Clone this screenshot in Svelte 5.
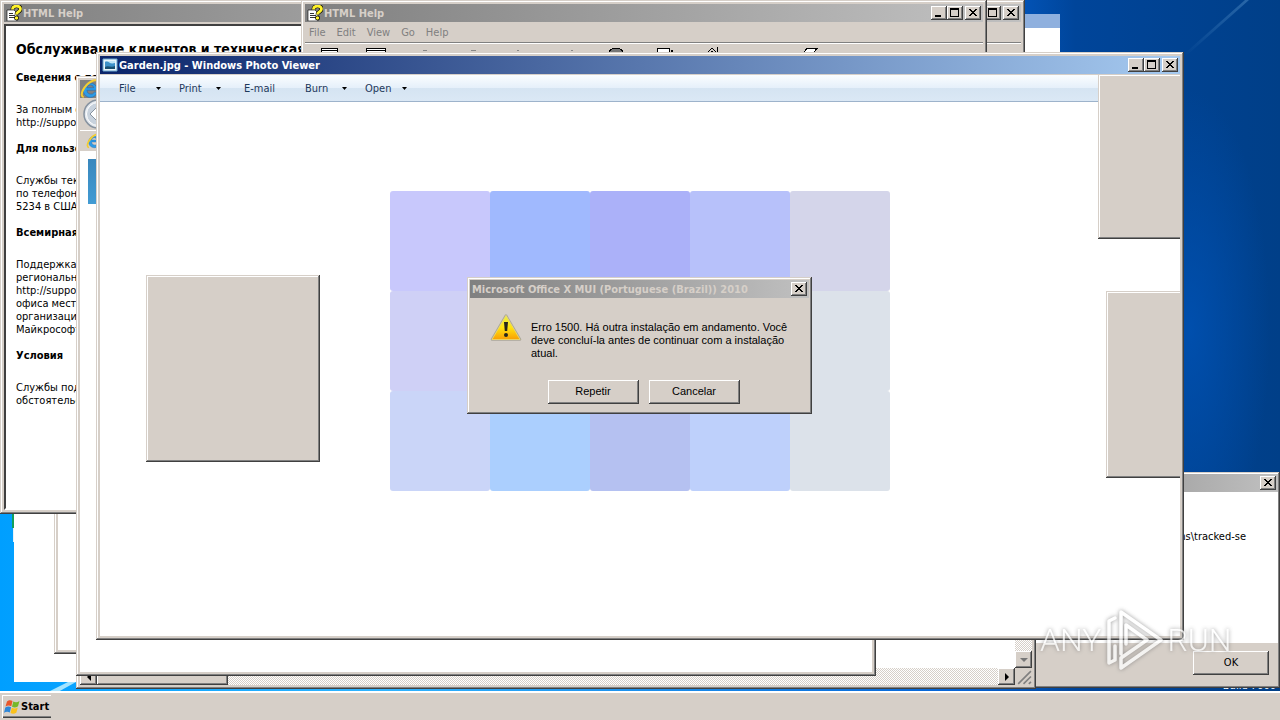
<script>
  const sections = [
    { title: 'Сведения о поддержке', lines: ['За полным описанием', 'http://support.microsoft.com'] },
    { title: 'Для пользователей', lines: ['Службы текстового', 'по телефону', '5234 в США'] },
    {
      title: 'Всемирная поддержка',
      lines: ['Поддержка', 'региональных', 'http://support.microsoft.com', 'офиса местного', 'организацией', 'Майкрософт']
    },
    { title: 'Условия', lines: ['Службы поддержки', 'обстоятельства'] }
  ];
  const helpMenu = ['File', 'Edit', 'View', 'Go', 'Help'];
  const viewerMenu = [
    { label: 'File', drop: true },
    { label: 'Print', drop: true },
    { label: 'E-mail', drop: false },
    { label: 'Burn', drop: true },
    { label: 'Open', drop: true }
  ];
  const tiles = [
    '#c8c8fc', '#a0b9fe', '#abb1f9', '#b7c1fa', '#d4d5ea',
    '#cfd0f6', '#a8c4fe', '#b1b9f6', '#bccafa', '#dce2ea',
    '#cad5f8', '#abcffe', '#b5c1f1', '#bed0fb', '#dce2ea'
  ];
</script>

{#snippet cap(kind)}
  <button class="cap" aria-label={kind}>
    <svg width="12" height="10" viewBox="0 0 12 10" shape-rendering="crispEdges">
      {#if kind === 'Minimize'}
        <path d="M2 7h6v2H2z" />
      {:else if kind === 'Maximize'}
        <path d="M1 0h9v9H1zM2 2v6h7V2z" fill-rule="evenodd" />
      {:else}
        <path d="M2 1h2v1h1v1h2V2h1V1h2v1H9v1H8v1H7v1h1v1h1v1h1v1H8V7H7V6H5v1H4v1H2V7h1V6h1V5h1V4H4V3H3V2H2z" />
      {/if}
    </svg>
  </button>
{/snippet}

{#snippet helpIcon()}
  <svg class="icon" width="16" height="16" viewBox="0 0 16 16">
    <path d="M1 5h7l3 3v8H1z" fill="#fff" stroke="#000" stroke-width=".6" />
    <path d="M3 8.500h4M3 10.500h6M3 12.500h6" stroke="#333" />
    <path d="M6.500 4.500c0-4.500 8-4.500 8-.5 0 3-4 2.500-4 5.500" fill="none" stroke="#000" stroke-width="4" />
    <circle cx="10.500" cy="13" r="2.400" fill="#000" />
    <path d="M6.500 4.500c0-4.500 8-4.500 8-.5 0 3-4 2.500-4 5.500" fill="none" stroke="#fff22a" stroke-width="2.800" />
    <circle cx="10.500" cy="13" r="1.700" fill="#fff22a" />
  </svg>
{/snippet}

{#snippet ie(size)}
  <svg width={size} height={size} viewBox="0 0 16 16">
    <path d="M14 9H5.500a3.200 3.200 0 0 0 6 1.500h2.300A5.700 5.700 0 1 1 14 9zM5.500 7H11a2.800 2.800 0 0 0-5.500 0z" fill="#2d9be6" stroke="#1467b3" stroke-width=".4" />
    <path d="M3 14.500C-1 14 3 5 9 2c3-1.500 6-1.500 5 1.500" fill="none" stroke="#f4cd2f" stroke-width="1.600" />
  </svg>
{/snippet}

<main class="desktop">
  <svg class="wallpaper" viewBox="0 0 1280 720" preserveAspectRatio="none" aria-hidden="true">
    <defs>
      <linearGradient id="sky" x1="0" x2="1">
        <stop offset="0" stop-color="#009fff" />
        <stop offset=".3" stop-color="#30b4ff" />
        <stop offset=".75" stop-color="#0563d6" />
        <stop offset=".84" stop-color="#00459a" />
        <stop offset="1" stop-color="#003f88" />
      </linearGradient>
      <radialGradient id="glow">
        <stop offset="0" stop-color="#0052b4" stop-opacity=".8" />
        <stop offset="1" stop-color="#0052b4" stop-opacity="0" />
      </radialGradient>
      <linearGradient id="ray" x1="1" x2="0" y1="0" y2="1">
        <stop offset="0" stop-color="#5a96cc" stop-opacity=".45" />
        <stop offset="1" stop-color="#5a96cc" stop-opacity="0" />
      </linearGradient>
    </defs>
    <rect width="1280" height="720" fill="url(#sky)" />
    <ellipse cx="1190" cy="330" rx="80" ry="240" fill="url(#glow)" />
    <path d="M1245 0 1184 54 1186 56 1249 0z" fill="url(#ray)" />
    <path d="M48 692 68 682h8l-18 10z" fill="#a5e4ff" />
    <path d="M12 513h2v15h-2z" fill="#12a05a" />
    <path d="M13 528h1v14h-1z" fill="#e6f2f8" />
  </svg>

  <section class="back-window" aria-label="Background window"><div class="back-title"></div></section>
  <section class="win slim-window" aria-label="Window"></section>

  <section class="win help-far" aria-label="HTML Help">
    <header class="title inactive">{@render cap('Maximize')}<span class="gap"></span>{@render cap('Close')}</header>
    <div class="far-menu"></div>
  </section>

  <section class="win help-text" aria-label="HTML Help">
    <header class="title inactive">{@render helpIcon()}<h2>HTML Help</h2></header>
    <article>
      <h1>Обслуживание клиентов и техническая</h1>
      {#each sections as s}
        <h3>{s.title}</h3>
        <p>{#each s.lines as l}<span>{l}</span>{/each}</p>
      {/each}
    </article>
  </section>

  <section class="win help-near" aria-label="HTML Help">
    <header class="title inactive">
      {@render helpIcon()}<h2>HTML Help</h2>
      {@render cap('Minimize')}{@render cap('Maximize')}<span class="gap"></span>{@render cap('Close')}
    </header>
    <nav class="help-menu">{#each helpMenu as m}<button>{m}</button>{/each}</nav>
    <svg class="tools" width="520" height="16" viewBox="0 0 520 16" shape-rendering="crispEdges">
      <path d="M16.500 4.500h16v12h-16zM61.500 4.500h19v12h-19z" fill="#fff" stroke="#000" />
      <path d="M17 6h15M62 6h18" stroke="#000" />
      <ellipse cx="311" cy="11" rx="8" ry="7" fill="#777" stroke="#000" />
      <path d="M352.500 4.500h12v12h-12z" fill="#fff" stroke="#000" />
      <path d="M366 6h2v3h-2z" fill="#000" />
      <path d="M402 9l5-5 5 5M405 9l2-2 2 2M412.500 3v6" fill="none" stroke="#000" />
      <path d="M498 9l4-4.500h10l-4 4.500" fill="#fff" stroke="#000" />
      <path d="M118 6.500h4M166 6.500h5M212 6.500h2M266 6.500h2" stroke="#888" />
    </svg>
  </section>

  <section class="win msg-window" aria-label="Message">
    <header class="title inactive">{@render cap('Close')}</header>
    <div class="msg-body"><p>C:\Users\admin\Programs\tracked-se</p></div>
    <footer><button class="push">OK</button></footer>
  </section>

  <section class="win ie-window" aria-label="Internet Explorer">
    <div class="ie-page">
      <div class="vscroll"><button class="arrow" aria-label="Scroll down"><svg width="8" height="4" viewBox="0 0 8 4"><path d="M0 0h8L4 4z" fill="#777" /></svg></button></div>
    </div>
    <div class="hscroll">
      <button class="arrow" aria-label="Scroll left"><svg width="4" height="8" viewBox="0 0 4 8"><path d="M4 0v8L0 4z" /></svg></button>
      <div class="thumb"></div>
      <button class="arrow right" aria-label="Scroll right"><svg width="4" height="8" viewBox="0 0 4 8"><path d="M0 0v8l4-4z" /></svg></button>
      <svg width="16" height="16" viewBox="0 0 16 16"><path d="M3 15 15 3M8 15l7-7M13 15l2-2" stroke="#808080" stroke-width="1.500" /></svg>
    </div>
  </section>

  <section class="win ie-front" aria-label="Internet Explorer">
    <header class="title inactive">{@render ie(20)}</header>
    <div class="ie-nav">
      <svg width="32" height="32" viewBox="0 0 32 32"><circle cx="16" cy="16" r="14" fill="#e3e8ee" stroke="#8793a0" stroke-width="1.500" /><circle cx="16" cy="16" r="11.500" fill="#c8d2dd" stroke="#fff" /><path d="M16 8 8 16l8 8v-5h8v-6h-8z" fill="#fff" stroke="#8793a0" /></svg>
    </div>
    <div class="ie-tab">{@render ie(16)}</div>
    <div class="ie-banner"></div>
  </section>

  <section class="win viewer" aria-label="Windows Photo Viewer">
    <header class="title active">
      <svg class="icon" width="16" height="16" viewBox="0 0 16 16"><path d="M1 2h14v12H1z" fill="#e9f4fb" stroke="#69a6cf" /><path d="M3 4h10v8H3z" fill="#3d90c8" /><path d="M3 5c4-2 4 3 10 1V4H3z" fill="#bfe4f7" /><path d="M3 12v-2c3-2 6 1 10-1v3z" fill="#184e70" /></svg>
      <h2>Garden.jpg - Windows Photo Viewer</h2>
      {@render cap('Minimize')}{@render cap('Maximize')}<span class="gap"></span>{@render cap('Close')}
    </header>
    <nav class="viewer-menu">
      {#each viewerMenu as m}
        <button class:drop={m.drop}>{m.label}{#if m.drop}<svg width="5" height="3" viewBox="0 0 5 3"><path d="M0 0h5L2.500 3z" /></svg>{/if}</button>
      {/each}
    </nav>
    <div class="canvas">
      <div class="mosaic">{#each tiles as c}<i style:background={c}></i>{/each}</div>
    </div>
    <div class="panel left"></div>
    <div class="panel upper"></div>
    <div class="panel lower"></div>
  </section>

  <div class="win dialog" role="alertdialog" aria-labelledby="dlg-title" aria-describedby="dlg-text">
    <header class="title inactive"><h2 id="dlg-title">Microsoft Office X MUI (Portuguese (Brazil)) 2010</h2>{@render cap('Close')}</header>
    <div class="dlg-body">
      <svg width="32" height="32" viewBox="0 0 32 32">
        <defs><linearGradient id="warn" x2="0" y2="1"><stop offset="0" stop-color="#e9ee4a" /><stop offset=".5" stop-color="#ffe411" /><stop offset="1" stop-color="#f99f05" /></linearGradient></defs>
        <path d="M16 3.500 30 27.500H2z" fill="url(#warn)" stroke="#aaa79b" stroke-width="2.500" stroke-linejoin="round" />
        <path d="M16 3.500 30 27.500H2z" fill="url(#warn)" stroke="#f1dd69" stroke-width=".8" stroke-linejoin="round" />
        <path d="M14 10h4l-.8 9h-2.400z" fill="#25251d" /><circle cx="16" cy="23" r="2" fill="#25251d" />
      </svg>
      <p id="dlg-text"><span>Erro 1500. Há outra instalação em andamento. Você</span><span>deve concluí-la antes de continuar com a instalação</span><span>atual.</span></p>
    </div>
    <div class="dlg-actions"><button class="push">Repetir</button><button class="push">Cancelar</button></div>
  </div>

  <div class="build">Build 7600</div>

  <footer class="taskbar">
    <button class="start">
      <svg width="16" height="16" viewBox="0 0 16 16">
        <path d="M3 2.500c2-2 4-1.500 5.500-.5L7.300 7.300C5.500 6.300 3.700 6.300 1.500 7.500z" fill="#e9572b" /><path d="M9.300 2.500c2 1 4 1 6.200-.5L14 7.300c-2 1.500-4 1.500-6 .5z" fill="#76b82a" />
        <path d="M1.300 8.500c2-1.200 4-1.200 5.800-.2L5.800 13.500C4 12.500 2 12.500 0 13.700z" fill="#2f87d8" /><path d="M7.800 8.800c2 1 4 1 6-.3l-1.500 5.200c-2 1.300-4 1.300-5.800.3z" fill="#fbc21c" />
      </svg>
      Start
    </button>
  </footer>

  <div class="watermark" aria-label="ANY RUN">
    <span>ANY</span>
    <svg width="60" height="64" viewBox="0 0 60 64" fill="none" stroke="#fff" stroke-width="3.500" stroke-linejoin="round" stroke-linecap="round">
      <path d="M17 46V4L57 32 17 60V50L43 32 22 17V36" />
      <path d="M11 10 5 13v42l6-3V38" />
    </svg>
    <span>RUN</span>
  </div>
</main>

<style>
  :global(body) { margin: 0; overflow: hidden; }
  * { box-sizing: border-box; }
  .desktop {
    position: relative; height: 100vh; overflow: hidden; background: #00459a; color: #000;
    font: 11px/13px "DejaVu Sans Condensed", "DejaVu Sans", sans-serif;
  }
  h1, h2, h3, p { margin: 0; font-size: 11px; line-height: 13px; }
  button { font: inherit; color: inherit; margin: 0; padding: 0; border: 0; background: none; white-space: nowrap; }
  svg { display: block; flex: none; }
  .wallpaper { position: absolute; inset: 0; width: 100%; height: 100%; }

  .win {
    position: absolute; display: flex; flex-direction: column; padding: 4px; overflow: hidden; background: #d6cfc8;
    box-shadow: inset -1px -1px #404040, inset 1px 1px #d6cfc8, inset -2px -2px #808080, inset 2px 2px #fff;
  }
  .title { display: flex; align-items: center; flex: none; height: 18px; padding: 0 2px; color: #d6cfc8; }
  .title h2 { flex: 1; white-space: nowrap; overflow: hidden; }
  .inactive { background: linear-gradient(90deg, #808080, #c0c0c0); }
  .active { background: linear-gradient(90deg, #0a246a, #a6caf0); color: #fff; }
  .icon { margin-right: 1px; }
  .gap { width: 2px; }
  .cap {
    display: grid; place-items: center; flex: none; width: 16px; height: 14px; background: #d6cfc8; color: #000;
    box-shadow: inset -1px -1px #404040, inset 1px 1px #fff, inset -2px -2px #808080;
  }

  .back-window { position: absolute; left: 14px; top: 14px; width: 1046px; height: 668px; background: #fff; }
  .back-title { height: 14px; background: #8fb0de; }
  .slim-window, .ie-front { background: linear-gradient(#fff, #fff) content-box, #d6cfc8; }
  .slim-window { left: 54px; top: 300px; width: 400px; height: 354px; }

  .help-far { left: 340px; top: 0; width: 685px; height: 500px; }
  .help-far .title { justify-content: flex-end; }
  .far-menu { height: 21px; border-bottom: 1px solid #808080; box-shadow: 0 1px #fff; }

  .help-text { left: 0; top: 0; width: 690px; height: 514px; }
  .help-text article {
    flex: 1; margin-top: 2px; padding: 14px 10px; background: #fff; overflow: hidden; white-space: nowrap;
    border: 2px solid; border-color: #404040 #fff #fff #404040;
  }
  h1 { font-size: 14px; line-height: 18px; margin-bottom: 13px; }
  h3 { margin-bottom: 19px; }
  article p { margin-bottom: 13px; }
  p span { display: block; }

  .help-near { left: 301px; top: 0; width: 686px; height: 500px; }
  .help-menu { display: flex; gap: 11px; height: 21px; padding: 0 4px; color: #808080; border-bottom: 1px solid #808080; box-shadow: 0 1px #fff; }
  .tools { margin-top: 1px; }

  .msg-window { left: 1000px; top: 472px; width: 280px; height: 216px; padding: 2px 2px 4px; }
  .msg-window .title { justify-content: flex-end; }
  .msg-body { flex: 1; padding: 38px 32px 0 0; background: #fff; text-align: right; white-space: nowrap; }
  .msg-window footer { display: flex; justify-content: flex-end; padding: 8px 9px; height: 41px; }
  .msg-window .push { width: 76px; }
  .push {
    height: 24px; width: 91px; padding-bottom: 2px; background: #d6cfc8;
    box-shadow: inset -1px -1px #404040, inset 1px 1px #fff, inset -2px -2px #808080;
  }

  .ie-window { left: 76px; top: 76px; width: 960px; height: 613px; }
  .ie-page { display: flex; justify-content: flex-end; flex: 1; background: #fff; }
  .vscroll, .hscroll { background: repeating-conic-gradient(#fff 0 25%, #d6cfc8 0 50%) 0 0 / 2px 2px; }
  .vscroll { display: flex; align-items: flex-end; width: 17px; }
  .hscroll { display: flex; height: 17px; }
  .arrow, .thumb { background: #d6cfc8; box-shadow: inset -1px -1px #404040, inset 1px 1px #fff, inset -2px -2px #808080; }
  .arrow { display: grid; place-items: center; width: 17px; height: 17px; }
  .thumb { width: 131px; }
  .right { margin-left: auto; }
  .hscroll > svg { background: #d6cfc8; width: 17px; height: 17px; }

  .ie-front { left: 76px; top: 76px; width: 800px; height: 600px; }
  .ie-front .title { padding: 0; }
  .ie-nav { height: 32px; padding-left: 2px; background: #d6cfc8; }
  .ie-tab { height: 21px; padding: 2px 6px; background: #d6cfc8; border-top: 1px solid #fff; }
  .ie-banner { height: 45px; margin: 8px; background: linear-gradient(#3987bd, #429bd3); }

  .viewer { left: 96px; top: 52px; width: 1088px; height: 588px; }
  .viewer-menu {
    display: flex; gap: 18px; height: 27px; margin-top: 1px; padding: 0 19px; align-items: center; color: #1e395b;
    background: linear-gradient(#fafdff, #e6f0fa 48%, #d5e4f2 52%, #dbe8f5); border-bottom: 1px solid #9db3cb;
  }
  .viewer-menu button { display: flex; align-items: center; justify-content: space-between; margin: 0 12px 0 5px; }
  .viewer-menu button.drop { width: 42px; margin: 0; }
  .canvas { flex: 1; display: grid; justify-content: center; align-content: start; padding-top: 89px; background: #fff; }
  .mosaic { display: grid; grid-template-columns: repeat(5, 100px); grid-auto-rows: 100px; }
  .mosaic i { border-radius: 3px; }
  .panel {
    position: absolute; background: #d6cfc8;
    box-shadow: inset -1px -1px #404040, inset 1px 1px #d6cfc8, inset -2px -2px #808080, inset 2px 2px #fff;
  }
  .left { left: 50px; top: 223px; width: 174px; height: 187px; }
  .upper, .lower { right: 4px; box-shadow: inset 0 -1px #404040, inset 1px 1px #d6cfc8, inset 0 -2px #808080, inset 2px 2px #fff; }
  .upper { top: 22px; width: 82px; height: 165px; }
  .lower { top: 239px; width: 74px; height: 187px; }

  .dialog { left: 467px; top: 277px; width: 345px; height: 137px; padding: 3px; font-family: "Liberation Sans", Arial, sans-serif; }
  .dialog h2 { font-family: "DejaVu Sans Condensed", "DejaVu Sans", sans-serif; }
  .dlg-body { display: flex; gap: 9px; padding: 14px 20px 0; height: 82px; white-space: nowrap; }
  .dlg-body p { padding-top: 9px; }
  .dlg-actions { display: flex; justify-content: center; gap: 10px; padding-left: 8px; }

  .build { position: absolute; right: 4px; bottom: 28px; color: #fff; clip-path: inset(9px 0 0 0); }
  .taskbar { position: absolute; inset: auto 0 0 0; height: 29px; padding: 4px 2px 2px; background: #d6cfc8; box-shadow: inset 0 2px #fff; }
  .start {
    display: flex; align-items: center; gap: 1px; height: 23px; width: 49px; padding-left: 2px; font-weight: 700;
    box-shadow: inset 1px 1px #fff, inset 0 -1px #404040, inset 0 -2px #808080;
  }

  .watermark {
    position: absolute; left: 1040px; top: 608px; display: flex; align-items: center; gap: 3px; color: #fff; opacity: .75;
    font: 300 32px/32px Roboto, "Liberation Sans", sans-serif; pointer-events: none;
    filter: drop-shadow(0 0 2px #777);
  }
</style>
